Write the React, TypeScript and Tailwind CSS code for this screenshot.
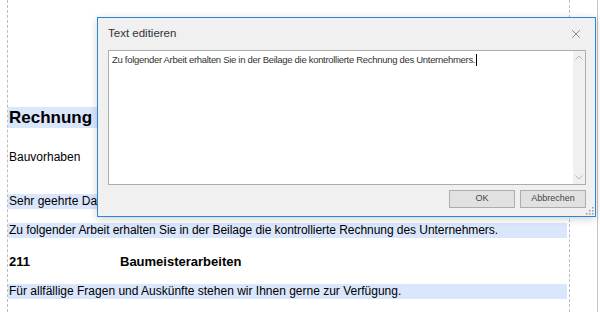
import { X } from "lucide-react";

const docFont = { fontFamily: '"Liberation Sans", Arial, sans-serif' };

function Line({ children, hl, className = "" }: { children: React.ReactNode; hl?: boolean; className?: string }) {
  return (
    <div
      className={`w-[559px] pl-[1px] text-[12px] text-black whitespace-nowrap ${hl ? "bg-[#dae6fc]" : ""} ${className}`}
    >
      {children}
    </div>
  );
}

function Dialog() {
  return (
    <div className="absolute left-[97px] top-[17px] w-[499px] h-[200px] bg-[#f0f0f0] border border-[#2a87d6] shadow-[0_2px_8px_rgba(0,0,0,0.18)] flex flex-col font-['Liberation_Sans',Arial,sans-serif]">
      {/* title bar */}
      <div className="h-[32px] flex items-center justify-between pl-[10px] pr-[12px]">
        <span className="text-[11.5px] text-[#333]">Text editieren</span>
        <X size={14} strokeWidth={1.1} className="text-[#555]" />
      </div>

      {/* text area */}
      <div className="ml-[10px] w-[478px] h-[135px] bg-white border border-[#adadad] flex">
        <div className="flex-1 pl-[3px] pt-[3px] text-[9.5px] leading-[12px] text-[#333] tracking-[-0.3px] whitespace-nowrap flex items-start">
          <span>Zu folgender Arbeit erhalten Sie in der Beilage die kontrollierte Rechnung des Unternehmers.</span>
          <span className="inline-block w-[1px] h-[12px] bg-black ml-[1px]" />
        </div>
        <div className="w-[12px] bg-[#f0f0f0] flex flex-col justify-between items-center py-[4px]">
          <svg width="8" height="5" viewBox="0 0 8 5">
            <path d="M0.5 4.5 L4 1 L7.5 4.5" fill="none" stroke="#b8b8b8" strokeWidth="1" />
          </svg>
          <svg width="8" height="5" viewBox="0 0 8 5">
            <path d="M0.5 0.5 L4 4 L7.5 0.5" fill="none" stroke="#b8b8b8" strokeWidth="1" />
          </svg>
        </div>
      </div>

      {/* buttons */}
      <div className="flex justify-end gap-[5px] pr-[9px] mt-[5px]">
        <button className="w-[66px] h-[18px] bg-[#e1e1e1] border border-[#adadad] text-[9px] text-[#444]">
          OK
        </button>
        <button className="w-[66px] h-[18px] bg-[#e1e1e1] border border-[#adadad] text-[9px] text-[#444]">
          Abbrechen
        </button>
      </div>

      {/* resize grip */}
      <div className="absolute right-[1px] bottom-[1px]">
        <svg width="8" height="8" viewBox="0 0 8 8">
          <rect x="6" y="0" width="1.5" height="1.5" fill="#9a9a9a" />
          <rect x="3" y="3" width="1.5" height="1.5" fill="#9a9a9a" />
          <rect x="6" y="3" width="1.5" height="1.5" fill="#9a9a9a" />
          <rect x="0" y="6" width="1.5" height="1.5" fill="#9a9a9a" />
          <rect x="3" y="6" width="1.5" height="1.5" fill="#9a9a9a" />
          <rect x="6" y="6" width="1.5" height="1.5" fill="#9a9a9a" />
        </svg>
      </div>
    </div>
  );
}

export default function App() {
  return (
    <div className="relative w-[600px] h-[312px] bg-white overflow-hidden flex" style={docFont}>
      <div className="w-[7px]" />
      <div className="w-[563px] h-full border-x border-dashed border-[#bdbdbd] flex flex-col">
        <Line hl className="mt-[107px] h-[21px] leading-[21px] !text-[17px] font-bold">
          Rechnung
        </Line>
        <Line className="mt-[22px] h-[15px] leading-[15px]">Bauvorhaben</Line>
        <Line hl className="mt-[29px] h-[15px] leading-[15px]">
          Sehr geehrte Damen und Herren
        </Line>
        <Line hl className="mt-[14px] h-[15px] leading-[15px] tracking-[-0.05px]">
          Zu folgender Arbeit erhalten Sie in der Beilage die kontrollierte Rechnung des Unternehmers.
        </Line>
        <Line className="mt-[16px] h-[15px] leading-[15px] !text-[13px] font-bold flex">
          <span className="w-[111px]">211</span>
          <span>Baumeisterarbeiten</span>
        </Line>
        <Line hl className="mt-[15px] h-[15px] leading-[15px]">
          Für allfällige Fragen und Auskünfte stehen wir Ihnen gerne zur Verfügung.
        </Line>
      </div>
      <div className="w-[27px]" />
      <div className="w-[1px] h-full bg-[#c4c4c4]" />
      <Dialog />
    </div>
  );
}
